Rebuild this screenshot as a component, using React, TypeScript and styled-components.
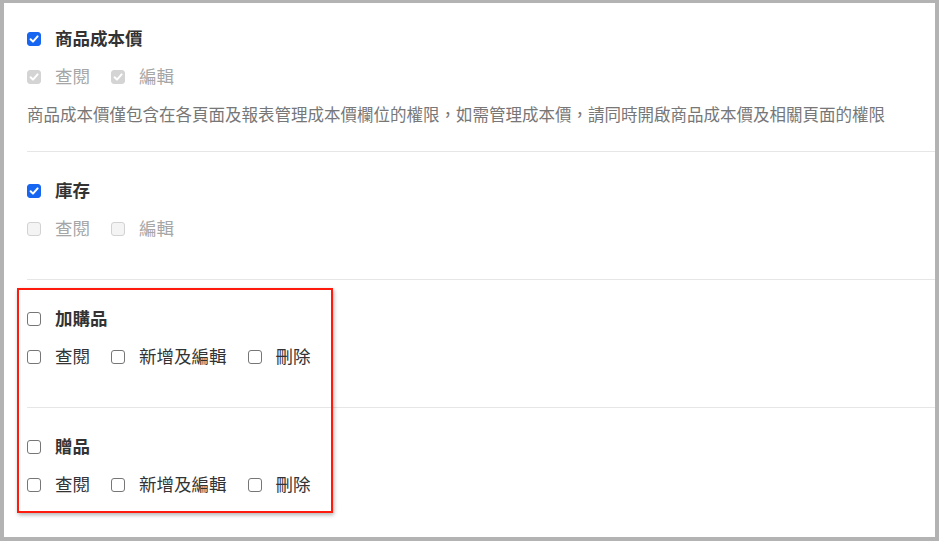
import React from "react";
import styled, { createGlobalStyle } from "styled-components";

type Perm = { label: string; checked?: boolean };

type Group = {
  title: string;
  checked: boolean;
  locked: boolean;
  perms: Perm[];
  note?: string;
};

const groups: Group[] = [
  {
    title: "商品成本價",
    checked: true,
    locked: true,
    perms: [
      { label: "查閱", checked: true },
      { label: "編輯", checked: true },
    ],
    note: "商品成本價僅包含在各頁面及報表管理成本價欄位的權限，如需管理成本價，請同時開啟商品成本價及相關頁面的權限",
  },
  {
    title: "庫存",
    checked: true,
    locked: true,
    perms: [{ label: "查閱" }, { label: "編輯" }],
  },
  {
    title: "加購品",
    checked: false,
    locked: false,
    perms: [{ label: "查閱" }, { label: "新增及編輯" }, { label: "刪除" }],
  },
  {
    title: "贈品",
    checked: false,
    locked: false,
    perms: [{ label: "查閱" }, { label: "新增及編輯" }, { label: "刪除" }],
  },
];

const CheckBox: React.FC<{ checked?: boolean; disabled?: boolean }> = ({
  checked,
  disabled,
}) => (
  <SBox $checked={!!checked} $disabled={!!disabled}>
    {checked && (
      <svg width="12" height="12" viewBox="0 0 12 12">
        <polyline
          points="2.6,6.2 5,8.6 9.6,3.4"
          fill="none"
          stroke="#fff"
          strokeWidth="2"
          strokeLinecap="round"
          strokeLinejoin="round"
        />
      </svg>
    )}
  </SBox>
);

const App: React.FC = (): React.ReactElement => {
  return (
    <>
      <GlobalStyle />
      <SPanel>
        {groups.map((g, i) => (
          <SSection
            key={g.title}
            $first={i === 0}
            $last={i === groups.length - 1}
          >
            <SRow>
              <CheckBox checked={g.checked} />
              <STitle>{g.title}</STitle>
            </SRow>
            <SRow>
              {g.perms.map((p) => (
                <SOption key={p.label}>
                  <CheckBox checked={p.checked} disabled={g.locked} />
                  <SLabel $muted={g.locked}>{p.label}</SLabel>
                </SOption>
              ))}
            </SRow>
            {g.note && <SNote>{g.note}</SNote>}
          </SSection>
        ))}
        <SHighlight />
      </SPanel>
    </>
  );
};

const GlobalStyle = createGlobalStyle`
  html, body {
    margin: 0;
    padding: 0;
    background: #fff;
  }
  body {
    font-family: "Noto Sans CJK TC", "Noto Sans", sans-serif;
  }
`;

const SPanel = styled.div`
  position: relative;
  box-sizing: border-box;
  width: 939px;
  height: 541px;
  overflow: hidden;
  background: #fff;
  border-style: solid;
  border-color: #b3b3b3;
  border-width: 3px 4px 4px 4px;
  padding-left: 23px;
`;

const SSection = styled.div<{ $first: boolean; $last: boolean }>`
  box-sizing: border-box;
  display: flex;
  flex-direction: column;
  gap: 10px;
  min-height: 128px;
  padding: ${(p) => (p.$first ? "22px 0 22px" : "25px 0 22px")};
  border-bottom: ${(p) => (p.$last ? "none" : "1px solid #e6e6e6")};
`;

const SRow = styled.div`
  display: flex;
  align-items: center;
  height: 28px;
`;

const SOption = styled.div`
  display: flex;
  align-items: center;
  margin-right: 21px;
`;

const SBox = styled.span<{ $checked: boolean; $disabled: boolean }>`
  box-sizing: border-box;
  display: inline-flex;
  align-items: center;
  justify-content: center;
  flex: none;
  width: 14px;
  height: 14px;
  border-radius: 3px;
  border: 1px solid
    ${(p) =>
      p.$checked
        ? p.$disabled
          ? "#d4d4d4"
          : "#1766f2"
        : p.$disabled
        ? "#d2d2d2"
        : "#767676"};
  background: ${(p) =>
    p.$checked ? (p.$disabled ? "#d4d4d4" : "#1766f2") : p.$disabled ? "#f4f4f4" : "#fff"};
  margin-right: 14px;
`;

const STitle = styled.span`
  font-size: 17.5px;
  font-weight: 700;
  color: #333;
  line-height: 26px;
  padding-bottom: 2px;
`;

const SLabel = styled.span<{ $muted: boolean }>`
  font-size: 17.5px;
  color: ${(p) => (p.$muted ? "#a6a6a6" : "#333")};
  line-height: 26px;
  padding-bottom: 2px;
`;

const SNote = styled.p`
  margin: 0;
  font-size: 16.5px;
  line-height: 26px;
  padding-bottom: 2px;
  color: #777;
  white-space: nowrap;
`;

const SHighlight = styled.div`
  position: absolute;
  left: 13px;
  top: 285px;
  width: 316px;
  height: 225px;
  box-sizing: border-box;
  border: 2px solid #ff1a0e;
  box-shadow: 1px 2px 4px rgba(0, 0, 0, 0.3);
  pointer-events: none;
`;

export default App;
